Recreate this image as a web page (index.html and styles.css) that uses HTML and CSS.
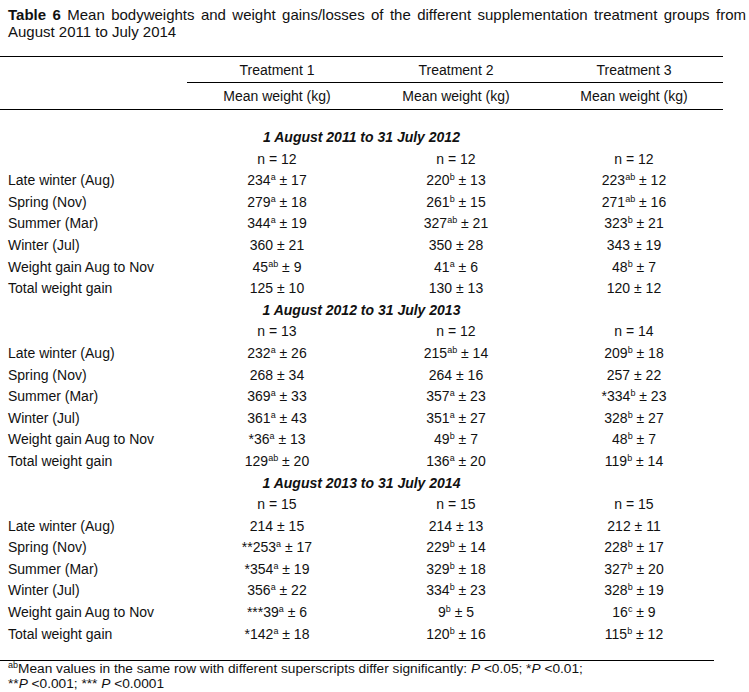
FILE: index.html
```html
<!DOCTYPE html>
<html lang="en">
<head>
<meta charset="utf-8">
<title>Table 6</title>
<link rel="stylesheet" href="styles.css">
</head>
<body>
<div class="page">
  <p class="caption"><b>Table 6</b> Mean bodyweights and weight gains/losses of the different supplementation treatment groups from August 2011 to July 2014</p>
  <table class="data">
    <colgroup>
      <col class="c-label">
      <col class="c-t1">
      <col class="c-t2">
      <col class="c-t3">
    </colgroup>
    <thead>
      <tr class="h1">
        <th class="blank" rowspan="2"></th>
        <th>Treatment 1</th>
        <th>Treatment 2</th>
        <th>Treatment 3</th>
      </tr>
      <tr class="h2">
        <th>Mean weight (kg)</th>
        <th>Mean weight (kg)</th>
        <th>Mean weight (kg)</th>
      </tr>
    </thead>
    <tbody>
      <tr class="period first"><td colspan="4">1 August 2011 to 31 July 2012</td></tr>
      <tr><td class="label"></td><td>n = 12</td><td>n = 12</td><td>n = 12</td></tr>
      <tr><td class="label">Late winter (Aug)</td><td>234<sup>a</sup> ± 17</td><td>220<sup>b</sup> ± 13</td><td>223<sup>ab</sup> ± 12</td></tr>
      <tr><td class="label">Spring (Nov)</td><td>279<sup>a</sup> ± 18</td><td>261<sup>b</sup> ± 15</td><td>271<sup>ab</sup> ± 16</td></tr>
      <tr><td class="label">Summer (Mar)</td><td>344<sup>a</sup> ± 19</td><td>327<sup>ab</sup> ± 21</td><td>323<sup>b</sup> ± 21</td></tr>
      <tr><td class="label">Winter (Jul)</td><td>360 ± 21</td><td>350 ± 28</td><td>343 ± 19</td></tr>
      <tr><td class="label">Weight gain Aug to Nov</td><td>45<sup>ab</sup> ± 9</td><td>41<sup>a</sup> ± 6</td><td>48<sup>b</sup> ± 7</td></tr>
      <tr><td class="label">Total weight gain</td><td>125 ± 10</td><td>130 ± 13</td><td>120 ± 12</td></tr>

      <tr class="period"><td colspan="4">1 August 2012 to 31 July 2013</td></tr>
      <tr><td class="label"></td><td>n = 13</td><td>n = 12</td><td>n = 14</td></tr>
      <tr><td class="label">Late winter (Aug)</td><td>232<sup>a</sup> ± 26</td><td>215<sup>ab</sup> ± 14</td><td>209<sup>b</sup> ± 18</td></tr>
      <tr><td class="label">Spring (Nov)</td><td>268 ± 34</td><td>264 ± 16</td><td>257 ± 22</td></tr>
      <tr><td class="label">Summer (Mar)</td><td>369<sup>a</sup> ± 33</td><td>357<sup>a</sup> ± 23</td><td>*334<sup>b</sup> ± 23</td></tr>
      <tr><td class="label">Winter (Jul)</td><td>361<sup>a</sup> ± 43</td><td>351<sup>a</sup> ± 27</td><td>328<sup>b</sup> ± 27</td></tr>
      <tr><td class="label">Weight gain Aug to Nov</td><td>*36<sup>a</sup> ± 13</td><td>49<sup>b</sup> ± 7</td><td>48<sup>b</sup> ± 7</td></tr>
      <tr><td class="label">Total weight gain</td><td>129<sup>ab</sup> ± 20</td><td>136<sup>a</sup> ± 20</td><td>119<sup>b</sup> ± 14</td></tr>

      <tr class="period"><td colspan="4">1 August 2013 to 31 July 2014</td></tr>
      <tr><td class="label"></td><td>n = 15</td><td>n = 15</td><td>n = 15</td></tr>
      <tr><td class="label">Late winter (Aug)</td><td>214 ± 15</td><td>214 ± 13</td><td>212 ± 11</td></tr>
      <tr><td class="label">Spring (Nov)</td><td>**253<sup>a</sup> ± 17</td><td>229<sup>b</sup> ± 14</td><td>228<sup>b</sup> ± 17</td></tr>
      <tr><td class="label">Summer (Mar)</td><td>*354<sup>a</sup> ± 19</td><td>329<sup>b</sup> ± 18</td><td>327<sup>b</sup> ± 20</td></tr>
      <tr><td class="label">Winter (Jul)</td><td>356<sup>a</sup> ± 22</td><td>334<sup>b</sup> ± 23</td><td>328<sup>b</sup> ± 19</td></tr>
      <tr><td class="label">Weight gain Aug to Nov</td><td>***39<sup>a</sup> ± 6</td><td>9<sup>b</sup> ± 5</td><td>16<sup>c</sup> ± 9</td></tr>
      <tr class="last"><td class="label">Total weight gain</td><td>*142<sup>a</sup> ± 18</td><td>120<sup>b</sup> ± 16</td><td>115<sup>b</sup> ± 12</td></tr>
    </tbody>
  </table>
  <div class="notes">
    <p><sup>ab</sup>Mean values in the same row with different superscripts differ significantly: <i>P</i> &lt;0.05; *<i>P</i> &lt;0.01;</p>
    <p>**<i>P</i> &lt;0.001; *** <i>P</i> &lt;0.0001</p>
  </div>
</div>
</body>
</html>
```

FILE: styles.css
```css
html, body {
  margin: 0;
  padding: 0;
  background: #ffffff;
}

body {
  font-family: "Liberation Sans", Arial, sans-serif;
  font-size: 14px;
  color: #111111;
}

.page {
  width: 749px;
}

.caption {
  margin: 0;
  padding: 6px 3px 0 8px;
  font-size: 15px;
  line-height: 17px;
  text-align: justify;
}

.caption b {
  font-weight: bold;
}

.data {
  margin-top: 16px;
  width: 723px;
  border-collapse: collapse;
  table-layout: fixed;
  border-top: 1px solid #000000;
}

.c-label { width: 187px; }
.c-t1 { width: 180px; }
.c-t2 { width: 178px; }
.c-t3 { width: 178px; }

.data th {
  font-weight: normal;
  text-align: center;
  padding: 0;
  border-bottom: 1px solid #000000;
}

.h1 th {
  height: 25px;
}

.h2 th {
  height: 26px;
}

.data td {
  padding: 0;
  height: 21.6px;
  line-height: 21.6px;
  text-align: center;
  white-space: nowrap;
}

.data td.label {
  text-align: left;
  padding-left: 8px;
}

.period td {
  font-weight: bold;
  font-style: italic;
}

.period.first td {
  padding-top: 17px;
}

.last td {
  padding-bottom: 15px;
}

sup {
  font-size: 9px;
  line-height: 0;
  vertical-align: 5px;
}

.notes {
  width: 714px;
  border-top: 1px solid #000000;
  font-size: 13.7px;
}

.notes p {
  margin: 0;
  padding-left: 8px;
  line-height: 15px;
}
```
